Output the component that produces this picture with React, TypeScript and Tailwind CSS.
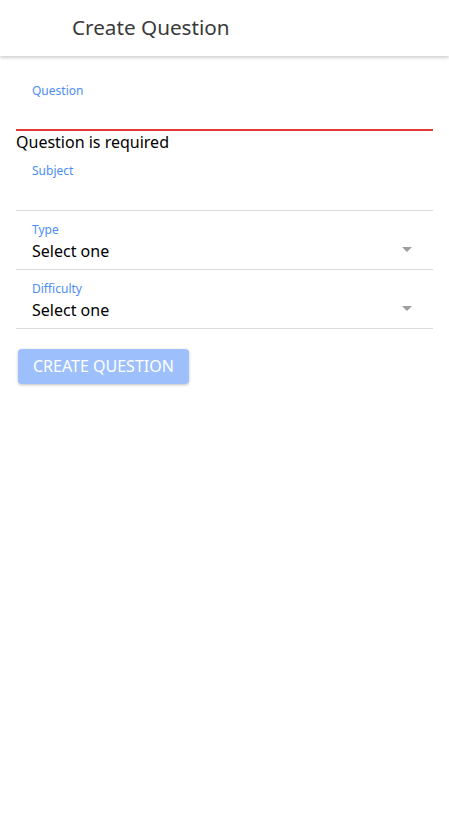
import React from 'react';

const SelectField: React.FC<{ label: string }> = ({ label }) => (
  <div className="border-b border-[#dcdcdc] pl-4 pr-[21px] pt-[11px] pb-[7px]">
    <div className="text-[12px] leading-[16px] text-[#4d8ef6]">{label}</div>
    <div className="mt-[2px] flex items-center justify-between">
      <span className="text-[16px] leading-[22px] text-black">Select one</span>
      <span className="w-0 h-0 border-l-[5px] border-r-[5px] border-t-[5px] border-l-transparent border-r-transparent border-t-[#9e9e9e] mb-[4px]" />
    </div>
  </div>
);

const App: React.FC = () => {
  return (
    <div className="min-h-screen bg-white font-['Noto_Sans',sans-serif]">
      <header className="h-14 flex items-center pl-[72px] shadow-[0_2px_3px_rgba(0,0,0,0.18)]">
        <h1 className="text-[20.7px] text-[#3a3a3a]">Create Question</h1>
      </header>

      <form className="px-4 pt-[27px]">
        <div className="pl-4 h-[48px] border-b-2 border-[#e53935]">
          <label className="block text-[12px] leading-[16px] text-[#4d8ef6]">Question</label>
        </div>
        <div className="text-[16px] leading-[22px] text-black">Question is required</div>

        <div className="pl-4 pt-[10px] h-[58px] border-b border-[#dcdcdc]">
          <label className="block text-[12px] leading-[16px] text-[#4d8ef6]">Subject</label>
        </div>

        <SelectField label="Type" />
        <SelectField label="Difficulty" />

        <button
          type="button"
          disabled
          className="block mt-5 ml-[2px] h-[35px] px-[15px] rounded-[4px] bg-[#9dc0fd] text-white text-[16px] leading-[35px] shadow-[0_1px_3px_rgba(0,0,0,0.25)]"
        >
          CREATE QUESTION
        </button>
      </form>
    </div>
  );
};

export default App;
